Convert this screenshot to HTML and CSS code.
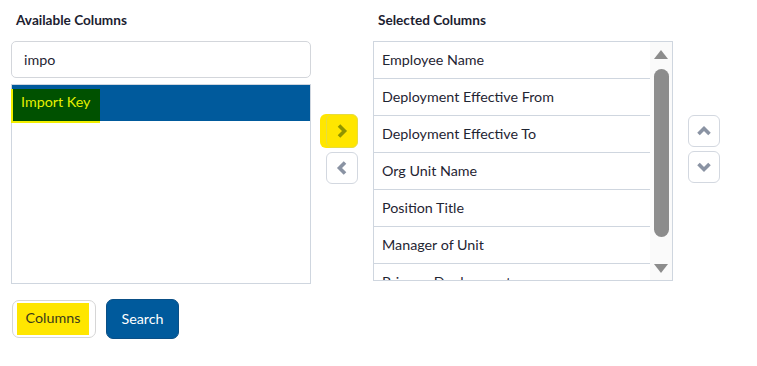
FILE: index.html
```html
<!DOCTYPE html>
<html lang="en">
<head>
<meta charset="UTF-8" />
<title>Column Picker</title>
<link rel="stylesheet" href="styles.css">
</head>
<body>

<div class="picker">

  <!-- available columns -->
  <div class="col">
    <h3>Available Columns</h3>
    <input class="filter" type="text" value="impo" />
    <div class="listbox">
      <div class="item selected"><span class="hit">Import Key</span></div>
    </div>
  </div>

  <!-- move buttons -->
  <div class="moves">
    <div class="btn-icon marked">
      <svg width="16" height="16" viewBox="0 0 16 16"><path d="M5 2.5 L10.5 8 L5 13.5" fill="none" stroke="#8f9400" stroke-width="3.6"/></svg>
    </div>
    <div class="btn-icon">
      <svg width="16" height="16" viewBox="0 0 16 16"><path d="M11 2.5 L5.5 8 L11 13.5" fill="none" stroke="#8a93a3" stroke-width="3.6"/></svg>
    </div>
  </div>

  <!-- selected columns -->
  <div class="col">
    <h3>Selected Columns</h3>
    <div class="sel-box">
      <div class="rows">
        <div class="row">Employee Name</div>
        <div class="row">Deployment Effective From</div>
        <div class="row">Deployment Effective To</div>
        <div class="row">Org Unit Name</div>
        <div class="row">Position Title</div>
        <div class="row">Manager of Unit</div>
        <div class="row">Primary Deployment</div>
      </div>
      <div class="scroll">
        <div class="tri up"></div>
        <div class="track"><div class="thumb"></div></div>
        <div class="tri down"></div>
      </div>
    </div>
  </div>

  <!-- order buttons -->
  <div class="moves order">
    <div class="btn-icon">
      <svg width="16" height="16" viewBox="0 0 16 16"><path d="M2.5 11 L8 5.5 L13.5 11" fill="none" stroke="#8a93a3" stroke-width="3.6"/></svg>
    </div>
    <div class="btn-icon">
      <svg width="16" height="16" viewBox="0 0 16 16"><path d="M2.5 5 L8 10.5 L13.5 5" fill="none" stroke="#8a93a3" stroke-width="3.6"/></svg>
    </div>
  </div>

</div>

<div class="actions">
  <button class="btn plain"><span class="hl">Columns</span></button>
  <button class="btn primary">Search</button>
</div>

</body>
</html>
```

FILE: styles.css
```css
body {
  margin: 0;
  padding: 11px 11px;
  font-family: Lato, "Open Sans", sans-serif;
  font-size: 14.3px;
  color: #1f2533;
  background: #fff;
}
.picker {
  display: flex;
  gap: 15px;
}
.col {
  width: 300px;
  display: flex;
  flex-direction: column;
}
.col h3 {
  margin: 0 0 11px 5px;
  font-size: 13.6px;
  font-weight: bold;
  line-height: 19px;
  color: #1c2130;
}
.filter {
  height: 37px;
  box-sizing: border-box;
  border: 1px solid #d3d6db;
  border-radius: 5px;
  padding: 0 12px;
  font-family: inherit;
  font-size: 14.3px;
  color: #1f2533;
  outline: none;
}
.listbox {
  margin-top: 6px;
  height: 200px;
  box-sizing: border-box;
  border: 1px solid #cfd6df;
}
.item {
  height: 36px;
  display: flex;
  align-items: stretch;
}
.item.selected {
  background: #005a9c;
}
.hit {
  display: block;
  line-height: 17px;
  padding: 4px 10px 0 8px;
  margin: 4px 0 -2px -1px;
  background: #005100;
  color: #e6f000;
  border-left: 2px solid #f2ee00;
  border-bottom: 2px solid #f2ee00;
}
.moves {
  display: flex;
  flex-direction: column;
  gap: 4px;
  padding-top: 103px;
  width: 32px;
}
.moves.order {
  padding-top: 104px;
}
.btn-icon {
  width: 32px;
  height: 32px;
  box-sizing: border-box;
  border: 1px solid #d3d8e0;
  border-radius: 6px;
  background: #fff;
  display: flex;
  align-items: center;
  justify-content: center;
}
.btn-icon.marked {
  background: #ffe600;
  border-color: #e6dc40;
  box-shadow: -6px 0 0 #ffe600;
  height: 34px;
}
.sel-box {
  height: 240px;
  box-sizing: border-box;
  border: 1px solid #cfd6df;
  display: flex;
  overflow: hidden;
}
.rows {
  flex: 1;
  overflow: hidden;
}
.row {
  height: 36px;
  line-height: 35px;
  border-bottom: 1px solid #cfd6df;
  padding-left: 8px;
  white-space: nowrap;
}
.scroll {
  width: 22px;
  background: #fafafa;
  display: flex;
  flex-direction: column;
  align-items: center;
}
.tri {
  width: 0;
  height: 0;
  border-left: 7px solid transparent;
  border-right: 7px solid transparent;
}
.tri.up {
  margin-top: 8px;
  border-bottom: 9px solid #8c8c8c;
}
.tri.down {
  margin-bottom: 7px;
  border-top: 9px solid #8c8c8c;
}
.track {
  flex: 1;
  width: 15px;
  padding: 10px 0 26px;
}
.thumb {
  height: 168px;
  background: #8c8c8c;
  border-radius: 8px;
}
.actions {
  display: flex;
  gap: 10px;
  margin-top: 15px;
  padding-left: 1px;
}
.btn {
  font-family: inherit;
  font-size: 14.3px;
  border-radius: 7px;
  cursor: pointer;
}
.btn.plain {
  height: 38px;
  width: 84px;
  margin-top: 1px;
  background: #fff;
  border: 1px solid #d6d6d6;
  padding: 2px 6px 2px 4px;
  display: flex;
}
.hl {
  flex: 1;
  background: #ffe600;
  color: #3a3a1a;
  display: flex;
  align-items: center;
  justify-content: center;
  padding-bottom: 3px;
}
.btn.primary {
  height: 40px;
  width: 73px;
  background: #005a9c;
  border: 1px solid #0a4f86;
  color: #fff;
  padding-bottom: 3px;
}
```
